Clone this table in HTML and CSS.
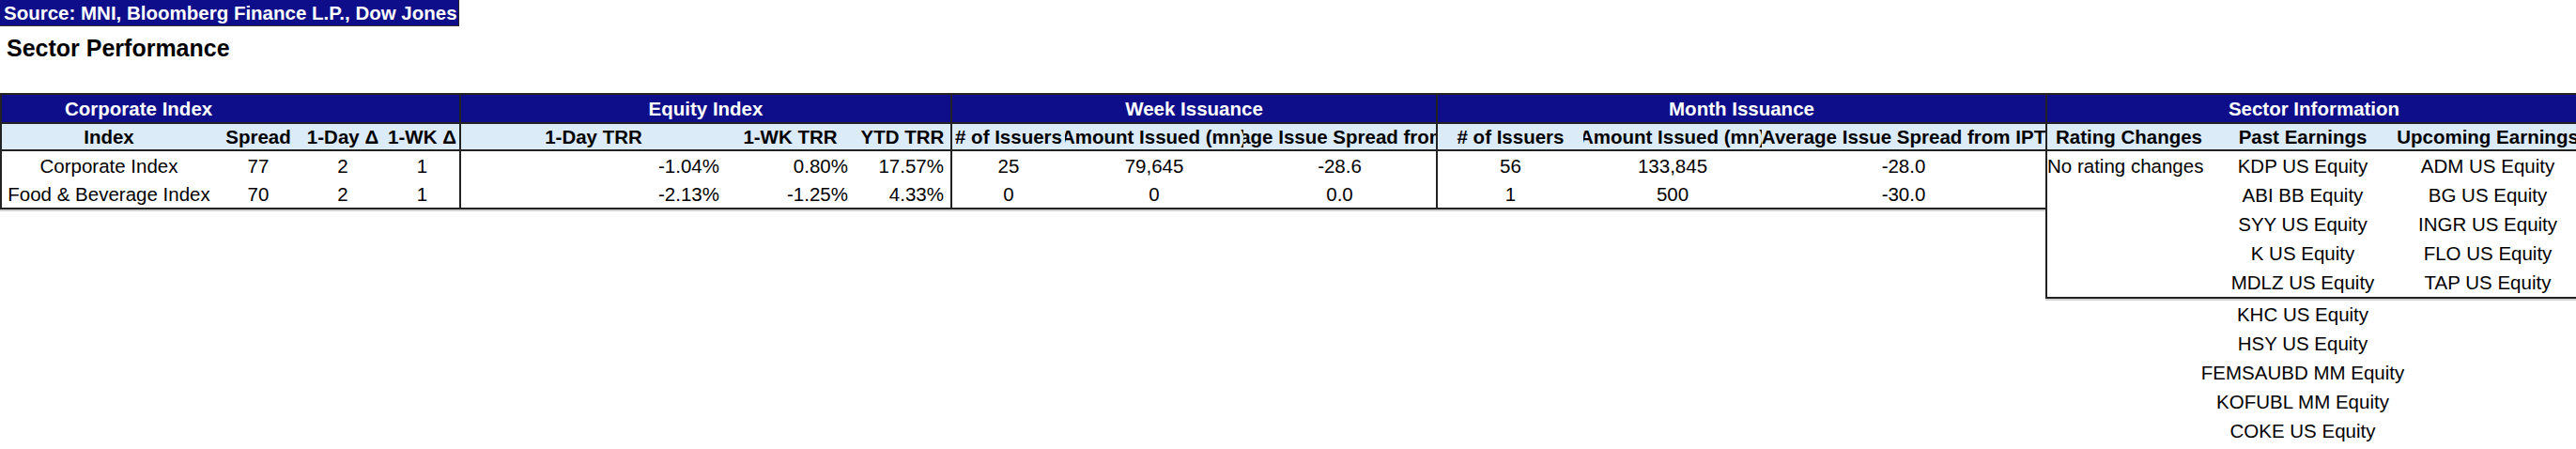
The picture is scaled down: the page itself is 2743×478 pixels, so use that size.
FILE: index.html
```html
<!DOCTYPE html>
<html lang="en">
<head>
<meta charset="utf-8">
<title>Sector Performance</title>
<link rel="stylesheet" href="styles.css">
</head>
<body>
<div class="source"><span>Source: MNI, Bloomberg Finance L.P., Dow Jones</span></div>
<h1 class="title">Sector Performance</h1>
<div class="sheet">
  <div class="main">
    <div class="cell band sec corp-title span4"><span>Corporate Index</span></div>
    <div class="cell band sec span3"><span>Equity Index</span></div>
    <div class="cell band sec span3"><span>Week Issuance</span></div>
    <div class="cell band sec span3"><span>Month Issuance</span></div>

    <div class="cell head sec"><span>Index</span></div>
    <div class="cell head"><span>Spread</span></div>
    <div class="cell head"><span>1-Day Δ</span></div>
    <div class="cell head"><span>1-WK Δ</span></div>
    <div class="cell head sec"><span>1-Day TRR</span></div>
    <div class="cell head"><span>1-WK TRR</span></div>
    <div class="cell head"><span>YTD TRR</span></div>
    <div class="cell head sec"><span># of Issuers</span></div>
    <div class="cell head"><span>Amount Issued (mn)</span></div>
    <div class="cell head"><span>Average Issue Spread from IPT</span></div>
    <div class="cell head sec"><span># of Issuers</span></div>
    <div class="cell head"><span>Amount Issued (mn)</span></div>
    <div class="cell head"><span>Average Issue Spread from IPT</span></div>

    <div class="cell sec"><span>Corporate Index</span></div>
    <div class="cell"><span>77</span></div>
    <div class="cell"><span>2</span></div>
    <div class="cell"><span>1</span></div>
    <div class="cell sec r"><span>-1.04%</span></div>
    <div class="cell r"><span>0.80%</span></div>
    <div class="cell r"><span>17.57%</span></div>
    <div class="cell sec"><span>25</span></div>
    <div class="cell"><span>79,645</span></div>
    <div class="cell"><span>-28.6</span></div>
    <div class="cell sec"><span>56</span></div>
    <div class="cell"><span>133,845</span></div>
    <div class="cell"><span>-28.0</span></div>

    <div class="cell sec last"><span>Food &amp; Beverage Index</span></div>
    <div class="cell last"><span>70</span></div>
    <div class="cell last"><span>2</span></div>
    <div class="cell last"><span>1</span></div>
    <div class="cell sec r last"><span>-2.13%</span></div>
    <div class="cell r last"><span>-1.25%</span></div>
    <div class="cell r last"><span>4.33%</span></div>
    <div class="cell sec last"><span>0</span></div>
    <div class="cell last"><span>0</span></div>
    <div class="cell last"><span>0.0</span></div>
    <div class="cell sec last"><span>1</span></div>
    <div class="cell last"><span>500</span></div>
    <div class="cell last"><span>-30.0</span></div>
  </div>

  <div class="sector">
    <div class="sector-box">
      <div class="cell band span3"><span>Sector Information</span></div>
      <div class="cell head"><span>Rating Changes</span></div>
      <div class="cell head"><span>Past Earnings</span></div>
      <div class="cell head"><span>Upcoming Earnings</span></div>

      <div class="cell l"><span>No rating changes</span></div>
      <div class="cell"><span>KDP US Equity</span></div>
      <div class="cell"><span>ADM US Equity</span></div>

      <div class="cell"></div>
      <div class="cell"><span>ABI BB Equity</span></div>
      <div class="cell"><span>BG US Equity</span></div>

      <div class="cell"></div>
      <div class="cell"><span>SYY US Equity</span></div>
      <div class="cell"><span>INGR US Equity</span></div>

      <div class="cell"></div>
      <div class="cell"><span>K US Equity</span></div>
      <div class="cell"><span>FLO US Equity</span></div>

      <div class="cell"></div>
      <div class="cell"><span>MDLZ US Equity</span></div>
      <div class="cell"><span>TAP US Equity</span></div>
    </div>
    <div class="sector-more">
      <div class="cell past"><span>KHC US Equity</span></div>
      <div class="cell past"><span>HSY US Equity</span></div>
      <div class="cell past"><span>FEMSAUBD MM Equity</span></div>
      <div class="cell past"><span>KOFUBL MM Equity</span></div>
      <div class="cell past"><span>COKE US Equity</span></div>
    </div>
  </div>
</div>
</body>
</html>
```

FILE: styles.css
```css
html, body {
  margin: 0;
  padding: 0;
  overflow: hidden;
  background: #ffffff;
}

body {
  width: 2743px;
  font-family: "Liberation Sans", Arial, sans-serif;
  font-size: 20.5px;
  color: #000000;
}

.source {
  box-sizing: border-box;
  width: 489px;
  height: 28px;
  padding-left: 4px;
  display: flex;
  align-items: center;
  overflow: hidden;
  white-space: nowrap;
  background: #0e0e8a;
  color: #ffffff;
  font-weight: bold;
  border-right: 1px solid #222222;
  border-bottom: 1px solid #333333;
}

.source > span {
  flex: none;
}

.title {
  margin: 8px 0 32px 7px;
  height: 31px;
  line-height: 31px;
  font-size: 25px;
  font-weight: bold;
}

.sheet {
  display: flex;
  align-items: flex-start;
  width: max-content;
}

.main {
  flex: none;
  display: grid;
  grid-template-columns: 230px 90px 90px 79px 284px 137px 102px 122px 190px 205px 157px 190px 302px;
  grid-auto-rows: 31px;
  box-shadow: 0 2px 0 #d0d0d0;
}

.cell {
  box-sizing: border-box;
  display: flex;
  align-items: center;
  justify-content: center;
  overflow: hidden;
  white-space: nowrap;
  min-width: 0;
}

.cell > span {
  flex: none;
}

.span4 { grid-column: span 4; }
.span3 { grid-column: span 3; }

.band {
  background: #0e0e8a;
  color: #ffffff;
  font-weight: bold;
  border-top: 2px solid #222222;
}

.head {
  background: #dcebf8;
  font-weight: bold;
  border-top: 2px solid #222222;
  border-bottom: 2px solid #222222;
}

.sec {
  border-left: 2px solid #222222;
}

.last {
  border-bottom: 2px solid #222222;
}

.r {
  justify-content: flex-end;
  padding-right: 7px;
}

.l {
  justify-content: flex-start;
}

.corp-title {
  justify-content: flex-start;
  padding-left: 67px;
}

.sector {
  flex: none;
  display: flex;
  flex-direction: column;
}

.sector-box {
  display: grid;
  grid-template-columns: 174px 196px 198px;
  grid-auto-rows: 31px;
  border-left: 2px solid #222222;
  border-bottom: 2px solid #222222;
  box-shadow: 0 2px 0 #d0d0d0;
}

.sector-more {
  display: grid;
  grid-template-columns: 174px 196px 198px;
  grid-auto-rows: 31.2px;
  padding-left: 2px;
  padding-top: 1px;
}

.past {
  grid-column: 2;
  overflow: visible;
}
```
